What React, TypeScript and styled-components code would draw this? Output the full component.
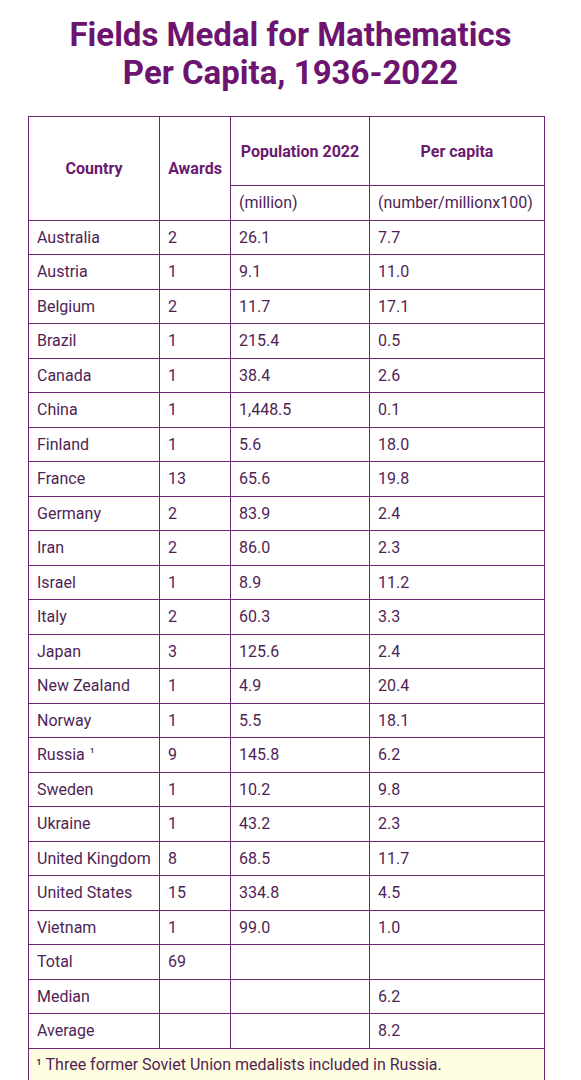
import styled, { createGlobalStyle } from 'styled-components';

const GlobalStyle = createGlobalStyle`
  html, body {
    margin: 0;
    padding: 0;
    background: #ffffff;
    font-family: Roboto, "Liberation Sans", sans-serif;
  }
`;

type Row = { country: string; awards: string; pop: string; perCapita: string; note?: boolean };

const rows: Row[] = [
  { country: 'Australia', awards: '2', pop: '26.1', perCapita: '7.7' },
  { country: 'Austria', awards: '1', pop: '9.1', perCapita: '11.0' },
  { country: 'Belgium', awards: '2', pop: '11.7', perCapita: '17.1' },
  { country: 'Brazil', awards: '1', pop: '215.4', perCapita: '0.5' },
  { country: 'Canada', awards: '1', pop: '38.4', perCapita: '2.6' },
  { country: 'China', awards: '1', pop: '1,448.5', perCapita: '0.1' },
  { country: 'Finland', awards: '1', pop: '5.6', perCapita: '18.0' },
  { country: 'France', awards: '13', pop: '65.6', perCapita: '19.8' },
  { country: 'Germany', awards: '2', pop: '83.9', perCapita: '2.4' },
  { country: 'Iran', awards: '2', pop: '86.0', perCapita: '2.3' },
  { country: 'Israel', awards: '1', pop: '8.9', perCapita: '11.2' },
  { country: 'Italy', awards: '2', pop: '60.3', perCapita: '3.3' },
  { country: 'Japan', awards: '3', pop: '125.6', perCapita: '2.4' },
  { country: 'New Zealand', awards: '1', pop: '4.9', perCapita: '20.4' },
  { country: 'Norway', awards: '1', pop: '5.5', perCapita: '18.1' },
  { country: 'Russia', awards: '9', pop: '145.8', perCapita: '6.2', note: true },
  { country: 'Sweden', awards: '1', pop: '10.2', perCapita: '9.8' },
  { country: 'Ukraine', awards: '1', pop: '43.2', perCapita: '2.3' },
  { country: 'United Kingdom', awards: '8', pop: '68.5', perCapita: '11.7' },
  { country: 'United States', awards: '15', pop: '334.8', perCapita: '4.5' },
  { country: 'Vietnam', awards: '1', pop: '99.0', perCapita: '1.0' },
  { country: 'Total', awards: '69', pop: '', perCapita: '' },
  { country: 'Median', awards: '', pop: '', perCapita: '6.2' },
  { country: 'Average', awards: '', pop: '', perCapita: '8.2' },
];

const App = () => {
  return (
    <Page>
      <GlobalStyle />
      <Title>
        Fields Medal for Mathematics
        <br />
        Per Capita, 1936-2022
      </Title>
      <Table>
        <colgroup>
          <col style={{ width: 131 }} />
          <col style={{ width: 71 }} />
          <col style={{ width: 139 }} />
          <col style={{ width: 175 }} />
        </colgroup>
        <thead>
          <HeadRow>
            <HeadCell rowSpan={2}>Country</HeadCell>
            <HeadCell rowSpan={2}>Awards</HeadCell>
            <HeadCell>Population 2022</HeadCell>
            <HeadCell>Per capita</HeadCell>
          </HeadRow>
          <BodyRow>
            <Cell>(million)</Cell>
            <Cell>(number/millionx100)</Cell>
          </BodyRow>
        </thead>
        <tbody>
          {rows.map((row) => (
            <BodyRow key={row.country}>
              <Cell>
                {row.country}
                {row.note && <Mark>¹</Mark>}
              </Cell>
              <Cell>{row.awards}</Cell>
              <Cell>{row.pop}</Cell>
              <Cell>{row.perCapita}</Cell>
            </BodyRow>
          ))}
          <tr>
            <Footnote colSpan={4}>¹ Three former Soviet Union medalists included in Russia.</Footnote>
          </tr>
        </tbody>
      </Table>
    </Page>
  );
};

const Page = styled.div`
  width: 581px;
  padding: 16px 0 0 28px;
  box-sizing: border-box;
`;

const Title = styled.h1`
  margin: 0 0 24px -28px;
  width: 581px;
  text-align: center;
  font-family: Roboto, "Liberation Sans", sans-serif;
  font-weight: 700;
  font-size: 33px;
  line-height: 38px;
  color: #6c1470;
`;

const Table = styled.table`
  width: 516px;
  table-layout: fixed;
  border-collapse: collapse;
  border: 1.5px solid #6e2673;
  color: #4f1f55;
  font-size: 16px;
`;

const HeadRow = styled.tr`
  height: 69px;
`;

const BodyRow = styled.tr`
  height: 34.5px;
`;

const HeadCell = styled.th`
  border: 1.5px solid #6e2673;
  padding: 0 6px;
  text-align: center;
  vertical-align: middle;
  font-weight: 700;
  font-size: 16px;
  color: #6a1a6f;
  white-space: nowrap;
`;

const Cell = styled.td`
  border: 1.5px solid #6e2673;
  padding: 0 8px;
  vertical-align: middle;
  white-space: nowrap;
`;

const Mark = styled.span`
  margin-left: 5px;
  font-size: 13px;
  vertical-align: 3px;
`;

const Footnote = styled.td`
  border: 1.5px solid #6e2673;
  border-bottom: none;
  background: #fffde0;
  padding: 6px 7px 12px;
  font-size: 16px;
  color: #4f1f55;
`;

export default App;
